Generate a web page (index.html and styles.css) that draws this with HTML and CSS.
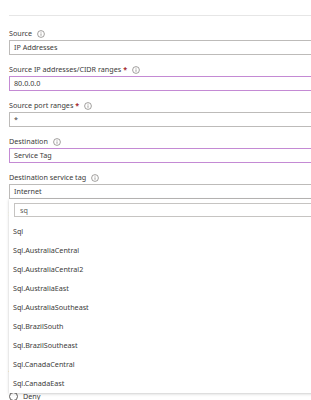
FILE: index.html
```html
<!DOCTYPE html>
<html>
<head>
<meta charset="utf-8">
<link rel="stylesheet" href="styles.css">
</head>
<body>
<div class="form">
  <div class="sep"></div>
  <div class="fields">
    <div class="field">
      <div class="label">Source <span class="info"><svg viewBox="0 0 8 8" width="8" height="8"><circle cx="4" cy="4" r="3.4" fill="none" stroke="#7a7774" stroke-width="0.7"/><line x1="4" y1="3.4" x2="4" y2="5.8" stroke="#7a7774" stroke-width="0.7"/><circle cx="4" cy="2.3" r="0.45" fill="#7a7774"/></svg></span></div>
      <div class="input">IP Addresses</div>
    </div>
    <div class="field">
      <div class="label">Source IP addresses/CIDR ranges <span class="req">*</span> <span class="info"><svg viewBox="0 0 8 8" width="8" height="8"><circle cx="4" cy="4" r="3.4" fill="none" stroke="#7a7774" stroke-width="0.7"/><line x1="4" y1="3.4" x2="4" y2="5.8" stroke="#7a7774" stroke-width="0.7"/><circle cx="4" cy="2.3" r="0.45" fill="#7a7774"/></svg></span></div>
      <div class="input active">80.0.0.0</div>
    </div>
    <div class="field">
      <div class="label">Source port ranges <span class="req">*</span> <span class="info"><svg viewBox="0 0 8 8" width="8" height="8"><circle cx="4" cy="4" r="3.4" fill="none" stroke="#7a7774" stroke-width="0.7"/><line x1="4" y1="3.4" x2="4" y2="5.8" stroke="#7a7774" stroke-width="0.7"/><circle cx="4" cy="2.3" r="0.45" fill="#7a7774"/></svg></span></div>
      <div class="input">*</div>
    </div>
    <div class="field">
      <div class="label">Destination <span class="info"><svg viewBox="0 0 8 8" width="8" height="8"><circle cx="4" cy="4" r="3.4" fill="none" stroke="#7a7774" stroke-width="0.7"/><line x1="4" y1="3.4" x2="4" y2="5.8" stroke="#7a7774" stroke-width="0.7"/><circle cx="4" cy="2.3" r="0.45" fill="#7a7774"/></svg></span></div>
      <div class="input active">Service Tag</div>
    </div>
    <div class="field tagfield">
      <div class="label">Destination service tag <span class="info"><svg viewBox="0 0 8 8" width="8" height="8"><circle cx="4" cy="4" r="3.4" fill="none" stroke="#7a7774" stroke-width="0.7"/><line x1="4" y1="3.4" x2="4" y2="5.8" stroke="#7a7774" stroke-width="0.7"/><circle cx="4" cy="2.3" r="0.45" fill="#7a7774"/></svg></span></div>
      <div class="input">Internet</div>
      <div class="dropdown">
        <div class="search">sq</div>
        <div class="options">
          <div class="option">Sql</div>
          <div class="option">Sql.AustraliaCentral</div>
          <div class="option">Sql.AustraliaCentral2</div>
          <div class="option">Sql.AustraliaEast</div>
          <div class="option">Sql.AustraliaSoutheast</div>
          <div class="option">Sql.BrazilSouth</div>
          <div class="option">Sql.BrazilSoutheast</div>
          <div class="option">Sql.CanadaCentral</div>
          <div class="option">Sql.CanadaEast</div>
        </div>
      </div>
    </div>
    <div class="field">
      <div class="label">Service</div>
      <div class="input">Custom</div>
    </div>
    <div class="field">
      <div class="label">Destination port ranges</div>
      <div class="input">8080</div>
    </div>
    <div class="field">
      <div class="label">Protocol</div>
      <div class="radios-col proto">
        <span class="radio"><span class="dot"></span>Any</span>
        <span class="radio"><span class="dot"></span>TCP</span>
        <span class="radio"><span class="dot"></span>UDP</span>
        <span class="radio"><span class="dot"></span>ICMP</span>
      </div>
    </div>
    <div class="field">
      <div class="label">Action</div>
      <div class="radios-col">
        <span class="radio"><span class="dot"></span>Allow</span>
        <span class="radio"><span class="dot"></span>Deny</span>
      </div>
    </div>
  </div>
</div>
</body>
</html>
```

FILE: styles.css
```css
html {
  overflow: hidden;
  background: #ffffff;
}
body {
  margin: 0;
  padding: 0;
  font-family: "Noto Sans", "Open Sans", sans-serif;
  font-size: 7.2px;
  color: #3b3a39;
}
.form {
  padding: 15px 0 0 9px;
  width: 330px;
}
.sep {
  height: 1px;
  background: #e6e6e6;
}
.fields {
  display: flex;
  flex-direction: column;
  gap: 9px;
  margin-top: 12px;
}
.field {
  display: flex;
  flex-direction: column;
}
.tagfield {
  position: relative;
  z-index: 5;
}
.label {
  height: 11px;
  line-height: 11px;
  margin-bottom: 1px;
  display: flex;
  align-items: center;
  white-space: nowrap;
}
.req {
  color: #a4262c;
  margin-left: 2px;
  font-weight: bold;
}
.info {
  display: inline-flex;
  margin-left: 5px;
}
.input {
  height: 13px;
  line-height: 13px;
  border: 1px solid #bdbbb9;
  padding-left: 4px;
}
.input.active {
  border-color: #c48ad4;
}
.dropdown {
  position: absolute;
  top: 27px;
  left: 0;
  right: 0;
  background: #ffffff;
  box-shadow: 0 1px 3px rgba(0, 0, 0, 0.18), 0 0 1px rgba(0, 0, 0, 0.12);
  padding: 4px 0 0 0;
}
.search {
  margin-left: 5px;
  height: 12px;
  line-height: 12px;
  border: 1px solid #c6c4c2;
  padding-left: 5px;
  color: #605e5c;
}
.options {
  margin-top: 5px;
  display: flex;
  flex-direction: column;
}
.option {
  height: 19px;
  line-height: 19px;
  padding-left: 4px;
}
.radios-col {
  display: flex;
  flex-direction: column;
  gap: 2px;
}
.radios-col.proto {
  gap: 5px;
}
.radio {
  display: inline-flex;
  align-items: center;
  height: 12px;
  gap: 5px;
}
.dot {
  width: 7px;
  height: 7px;
  border: 1px solid #605e5c;
  border-radius: 50%;
}
```
